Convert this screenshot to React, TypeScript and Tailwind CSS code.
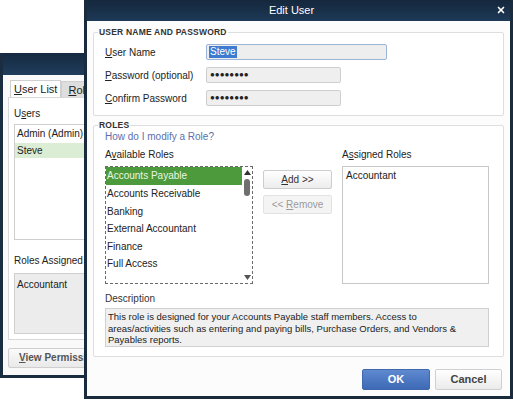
import React from 'react';
import { X } from 'lucide-react';

const font = { fontFamily: '"Liberation Sans", Arial, sans-serif' };

// underlined access-key letter, like a Windows dialog
function Key({ children }: { children: React.ReactNode }) {
  return <span className="underline underline-offset-[1px]">{children}</span>;
}

const AVAILABLE = ['Accounts Payable', 'Accounts Receivable', 'Banking', 'External Accountant', 'Finance', 'Full Access'];

function UserListWindow() {
  return (
    <div className="absolute left-0 top-[53px] w-[130px] h-[325px] border-[3px] border-t-0 border-[#1a2c40] bg-white flex flex-col">
      <div className="h-[22px] bg-gradient-to-b from-[#152a40] to-[#1f3d5c] shrink-0" />
      <div className="flex flex-col px-[5px] pt-[5px] bg-[#f9f9f9] flex-1">
        <div className="flex pl-[2px] text-[11px] text-[#222]">
          <div className="h-[17px] px-[3px] leading-[17px] bg-white border border-b-0 border-[#cfcfcf]">
            <Key>U</Key>ser List
          </div>
          <div className="h-[16px] mt-[1px] pl-[6px] pr-[3px] leading-[16px] bg-[#dedede] border border-b-0 border-[#cfcfcf]">
            <Key>R</Key>oles
          </div>
        </div>
        <div className="h-[243px] border border-[#d8d8d8] bg-white px-[5px] pt-[10px] text-[10px] text-[#222]">
          <div className="leading-[12px]">U<Key>s</Key>ers</div>
          <div className="mt-[4px] h-[116px] border border-[#cfcfcf] bg-white">
            <div className="h-[18px] leading-[18px] pl-[2px] whitespace-nowrap">Admin (Admin) (</div>
            <div className="h-[15px] leading-[15px] pl-[2px] bg-[#dcedd5]">Steve</div>
          </div>
          <div className="mt-[15px] leading-[12px]">Roles Assigned</div>
          <div className="mt-[6px] h-[61px] border border-[#cfcfcf] bg-[#ececec] pl-[2px] pt-[3px]">Accountant</div>
        </div>
        <div className="mt-[8px] h-[20px] w-[110px] border border-[#cfcfcf] rounded-[2px] bg-gradient-to-b from-[#fbfbfb] to-[#e9e9e9] pl-[10px] leading-[18px] text-[10px] font-bold text-[#555] whitespace-nowrap">
          <Key>V</Key>iew Permissions
        </div>
      </div>
    </div>
  );
}

function Button({ children, disabled }: { children: React.ReactNode; disabled?: boolean }) {
  return (
    <div
      className={
        'h-[19px] w-full rounded-[2px] border text-center leading-[17px] text-[10px] ' +
        (disabled
          ? 'border-[#e2e2e2] bg-[#f4f4f4] text-[#9a9a9a]'
          : 'border-[#cdcdcd] bg-gradient-to-b from-[#ffffff] to-[#ececec] text-[#333]')
      }
    >
      {children}
    </div>
  );
}

function EditUserWindow() {
  return (
    <div className="absolute left-[84px] top-0 w-[429px] h-[399px] border-[3px] border-t-0 border-[#1a2b3e] bg-white flex flex-col text-[#222]">
      <div className="relative h-[21px] shrink-0 bg-gradient-to-b from-[#14273c] to-[#1e3a58] flex items-center justify-center pr-[14px]">
        <span className="text-[11px] text-white">Edit User</span>
        <X className="absolute right-[4px] top-[5px] h-[10px] w-[10px] text-white" strokeWidth={4} />
      </div>

      <div className="flex flex-col px-[6px] bg-[#fcfcfc] flex-1">
        <fieldset className="mt-[6px] border border-[#dedede] rounded-[2px] px-[4px] pb-[9px] bg-white">
          <legend className="px-[1px] text-[8.5px] leading-[11px] font-bold text-[#333] tracking-[0.2px]">USER NAME AND PASSWORD</legend>
          <div className="flex flex-col gap-[7px] pl-[7px] pt-[6px] text-[10px]">
            <div className="flex items-center h-[16px]">
              <span className="w-[101px]"><Key>U</Key>ser Name</span>
              <div className="h-[16px] w-[181px] rounded-[2px] border border-[#9ab3d6] bg-[#eeeeee] pl-[2px] flex items-center">
                <span className="bg-[#3d7bd0] text-white leading-[12px] px-[1px]">Steve</span>
              </div>
            </div>
            <div className="flex items-center h-[16px]">
              <span className="w-[101px]"><Key>P</Key>assword (optional)</span>
              <div className="h-[16px] w-[135px] rounded-[2px] border border-[#cfcfcf] bg-[#efefef] pl-[3px] flex items-center text-[8px] tracking-[0px] font-bold">
                ●●●●●●●●
              </div>
            </div>
            <div className="flex items-center h-[16px]">
              <span className="w-[101px]"><Key>C</Key>onfirm Password</span>
              <div className="h-[16px] w-[135px] rounded-[2px] border border-[#cfcfcf] bg-[#efefef] pl-[3px] flex items-center text-[8px] tracking-[0px] font-bold">
                ●●●●●●●●
              </div>
            </div>
          </div>
        </fieldset>

        <fieldset className="mt-[4px] border border-[#dedede] rounded-[2px] px-[4px] pb-[9px] bg-white">
          <legend className="px-[1px] text-[8.5px] leading-[11px] font-bold text-[#333] tracking-[0.2px]">ROLES</legend>
          <div className="pl-[7px] text-[10px]">
            <div className="leading-[12px] text-[#5b6fae]">How do I modify a Role?</div>
            <div className="mt-[6px] grid grid-cols-[148px_69px_147px] gap-x-[10px]">
              <div className="leading-[12px]">A<Key>v</Key>ailable Roles</div>
              <div />
              <div className="leading-[12px]">A<Key>s</Key>signed Roles</div>

              <div className="mt-[5px] h-[118px] flex border border-dashed border-[#6a6a6a] bg-white">
                <div className="flex-1">
                  {AVAILABLE.map((r, i) => (
                    <div
                      key={r}
                      className={
                        'pl-[1px] whitespace-nowrap ' +
                        (i === 0 ? 'h-[18px] leading-[18px] bg-[#4c9a3b] text-[#eaf6e2]' : 'h-[17.5px] leading-[17.5px]')
                      }
                    >
                      {r}
                    </div>
                  ))}
                </div>
                <div className="w-[10px] flex flex-col items-center justify-between py-[3px]">
                  <div className="flex flex-col items-center gap-[4px]">
                    <svg width="7" height="5" viewBox="0 0 7 5"><path d="M3.5 0L7 5H0z" fill="#333" /></svg>
                    <div className="h-[17px] w-[6px] rounded-[3px] bg-[#6f6f6f]" />
                  </div>
                  <svg width="7" height="5" viewBox="0 0 7 5"><path d="M0 0h7L3.5 5z" fill="#555" /></svg>
                </div>
              </div>

              <div className="mt-[9px] flex flex-col gap-[6px]">
                <Button><Key>A</Key>dd &gt;&gt;</Button>
                <Button disabled>&lt;&lt; <Key>R</Key>emove</Button>
              </div>

              <div className="mt-[5px] h-[118px] border border-[#c8c8c8] bg-white pl-[3px] pt-[3px] leading-[12px]">Accountant</div>
            </div>

            <div className="mt-[9px] leading-[12px] text-[#333]">Description</div>
            <div className="mt-[3px] h-[39px] w-[384px] border border-[#d0d0d0] bg-[#f0f0f0] px-[2px] pt-[2px] leading-[11.5px] text-[9.5px]">
              This role is designed for your Accounts Payable staff members. Access to
              <br />
              areas/activities such as entering and paying bills, Purchase Orders, and Vendors &amp;
              <br />
              Payables reports.
            </div>
          </div>
        </fieldset>

        <div className="mt-[12px] flex justify-end gap-[5px] pr-[2px] text-[11px] font-bold">
          <div className="h-[21px] w-[68px] rounded-[2px] border border-[#3f68ad] bg-gradient-to-b from-[#5f8ad0] to-[#3d69b6] text-center leading-[19px] text-white">
            OK
          </div>
          <div className="h-[21px] w-[67px] rounded-[2px] border border-[#cfcfcf] bg-gradient-to-b from-[#ffffff] to-[#ebebeb] text-center leading-[19px] text-[#444]">
            Cancel
          </div>
        </div>
      </div>
    </div>
  );
}

export default function App() {
  return (
    <div className="relative w-[513px] h-[400px] bg-white overflow-hidden" style={font}>
      <UserListWindow />
      <EditUserWindow />
    </div>
  );
}
